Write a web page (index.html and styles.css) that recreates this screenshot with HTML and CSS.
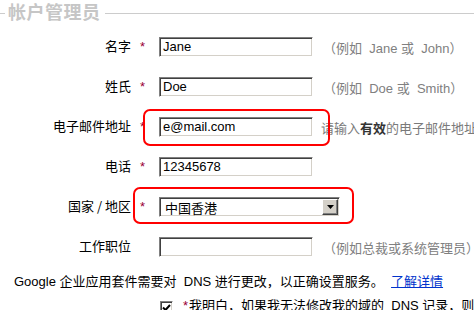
FILE: index.html
```html
<!DOCTYPE html>
<html lang="zh-CN">
<head>
<meta charset="utf-8">
<title>帐户管理员</title>
<link rel="stylesheet" href="styles.css">
</head>
<body>
<div class="page">
  <div class="header">
    <span class="rule rule-left"></span>
    <span class="title">帐户管理员</span>
    <span class="rule rule-right"></span>
  </div>

  <div class="form">
    <label class="label">名字</label>
    <span class="star">*</span>
    <div class="field"><span class="value">Jane</span></div>
    <span class="hint">（例如&nbsp; Jane 或&nbsp; John）</span>

    <label class="label">姓氏</label>
    <span class="star">*</span>
    <div class="field"><span class="value">Doe</span></div>
    <span class="hint">（例如&nbsp; Doe 或&nbsp; Smith）</span>

    <label class="label">电子邮件地址</label>
    <span class="star">*</span>
    <div class="field"><span class="value">e@mail.com</span></div>
    <span class="hint hint-email">请输入<b>有效</b>的电子邮件地址</span>

    <label class="label">电话</label>
    <span class="star">*</span>
    <div class="field"><span class="value">12345678</span></div>
    <span class="hint"></span>

    <label class="label">国家 / 地区</label>
    <span class="star">*</span>
    <div class="select">
      <span class="select-value">中国香港</span>
      <span class="select-btn"><svg width="7" height="4" viewBox="0 0 7 4"><path d="M0 0h7L3.5 4z" fill="#000"/></svg></span>
    </div>

    <label class="label">工作职位</label>
    <span class="star"></span>
    <div class="field"><span class="value"></span></div>
    <span class="hint">（例如总裁或系统管理员）</span>
  </div>

  <p class="dns">Google 企业应用套件需要对&nbsp; DNS 进行更改，以正确设置服务。&nbsp; <a href="#" class="more">了解详情</a></p>

  <div class="agree">
    <span class="checkbox"><svg width="9" height="8" viewBox="0 0 9 8"><path d="M1 3.5l2.5 2.5L8 1" fill="none" stroke="#000" stroke-width="2"/></svg></span>
    <span class="star-inline">*</span>
    <span class="agree-text">我明白，如果我无法修改我的域的&nbsp; DNS 记录，则可能无法使用</span>
  </div>

  <div class="mark mark-email"></div>
  <div class="mark mark-country"></div>
</div>
</body>
</html>
```

FILE: styles.css
```css
html, body {
  margin: 0;
  padding: 0;
  background: #fff;
}

body {
  font-family: "Liberation Sans", "Noto Sans CJK SC", sans-serif;
  font-size: 13px;
  color: #000;
  overflow: hidden;
  width: 474px;
  height: 310px;
}

.page {
  position: relative;
  width: 474px;
  height: 310px;
  overflow: hidden;
}

.header {
  display: flex;
  align-items: flex-start;
  height: 22px;
}

.rule {
  height: 1px;
  background: #cccccc;
  margin-top: 13px;
}

.rule-left {
  width: 5px;
  flex: none;
}

.rule-right {
  flex: 1;
  margin-left: 4px;
}

.title {
  margin-left: 3px;
  font-family: "Noto Sans CJK SC", sans-serif;
  font-size: 18px;
  font-weight: bold;
  line-height: 22px;
  color: #c6c6c6;
  letter-spacing: 0.5px;
}

.form {
  display: grid;
  grid-template-columns: 131px 28px 154px auto;
  grid-auto-rows: 20px;
  row-gap: 20px;
  margin-top: 15px;
  white-space: nowrap;
}

.label {
  text-align: right;
  line-height: 16px;
  padding-top: 1px;
  font-family: "Noto Sans CJK SC", sans-serif;
}

.star {
  color: #990033;
  padding-left: 9px;
  line-height: 16px;
  padding-top: 2px;
}

.field,
.select {
  box-sizing: border-box;
  height: 20px;
  border-top: 1px solid #808080;
  border-left: 1px solid #808080;
  border-right: 1px solid #ffffff;
  border-bottom: 1px solid #ffffff;
  box-shadow: inset 1px 1px 0 #404040, inset -1px -1px 0 #d4d0c8;
  background: #fff;
}

.value {
  display: block;
  padding-left: 3px;
  line-height: 18px;
}

.hint {
  padding-left: 10px;
  padding-top: 4px;
  line-height: 16px;
  color: #808080;
}

.hint-email {
  padding-left: 8px;
  color: #7a7a7a;
}

.hint-email b {
  color: #333;
}

.select {
  grid-column: 3 / 5;
  width: 181px;
  display: flex;
  align-items: stretch;
  padding: 1px 1px 1px 0;
}

.select-value {
  flex: 1;
  padding-left: 5px;
  line-height: 18px;
  font-family: "Noto Sans CJK SC", sans-serif;
}

.select-btn {
  box-sizing: border-box;
  width: 16px;
  background: #d4d0c8;
  border-top: 1px solid #fff;
  border-left: 1px solid #fff;
  border-right: 1px solid #404040;
  border-bottom: 1px solid #404040;
  box-shadow: inset -1px -1px 0 #808080;
  display: flex;
  align-items: center;
  justify-content: center;
}

.dns {
  margin: 17px 0 0 14px;
  line-height: 16px;
  white-space: nowrap;
  font-family: "Liberation Sans", "Noto Sans CJK SC", sans-serif;
}

.more {
  color: #0033cc;
  text-decoration: underline;
}

.agree {
  display: flex;
  align-items: flex-start;
  margin: 8px 0 0 160px;
  white-space: nowrap;
  line-height: 16px;
}

.checkbox {
  box-sizing: border-box;
  width: 13px;
  height: 13px;
  margin-top: 3px;
  border-top: 1px solid #808080;
  border-left: 1px solid #808080;
  border-right: 1px solid #fff;
  border-bottom: 1px solid #fff;
  box-shadow: inset 1px 1px 0 #404040, inset -1px -1px 0 #d4d0c8;
  display: flex;
  align-items: center;
  justify-content: center;
  flex: none;
}

.star-inline {
  color: #990033;
  margin-left: 10px;
  margin-right: 1px;
}

.mark {
  position: absolute;
  box-sizing: border-box;
  border: 2px solid #ff0000;
  border-radius: 7px;
}

.mark-email {
  left: 143px;
  top: 109px;
  width: 187px;
  height: 37px;
}

.mark-country {
  left: 133px;
  top: 187px;
  width: 221px;
  height: 37px;
}
```
